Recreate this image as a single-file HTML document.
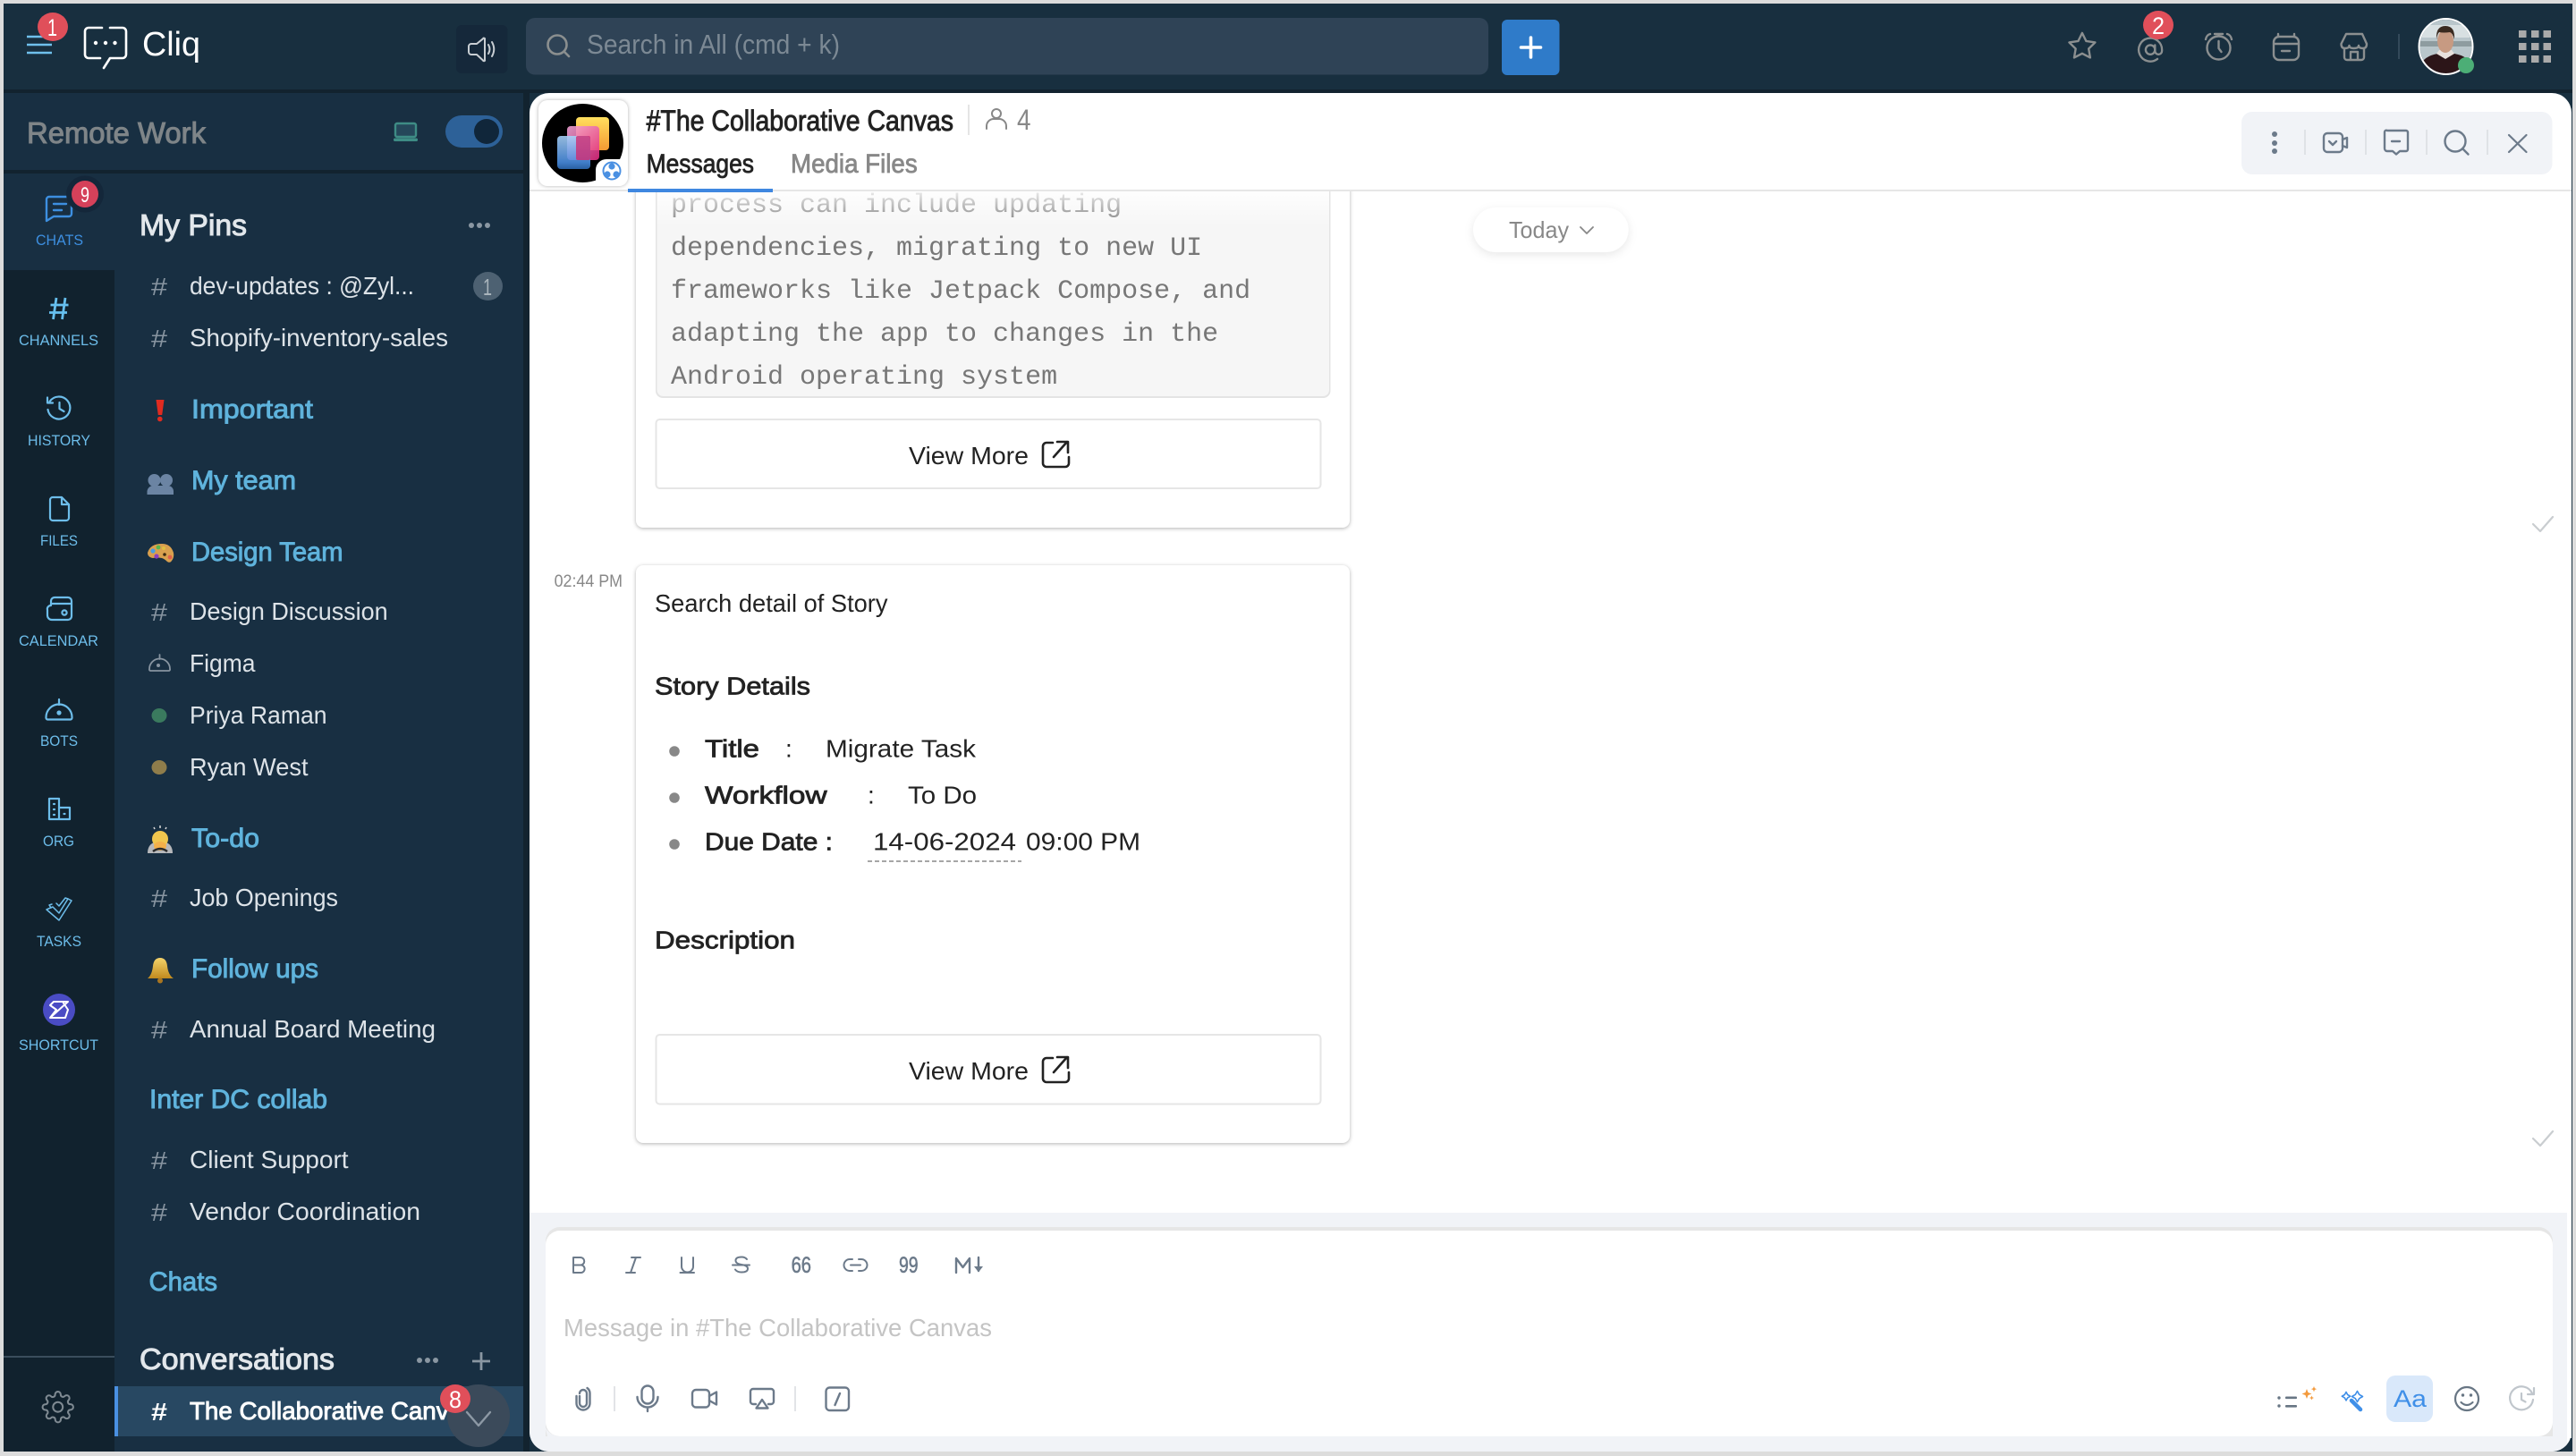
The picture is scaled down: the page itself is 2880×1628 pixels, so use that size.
<!DOCTYPE html>
<html lang="en"><head><meta charset="utf-8"><title>Cliq</title>
<style>
html,body{margin:0;padding:0;background:#dcdcdc}
svg{display:block}
text{font-family:"Liberation Sans",sans-serif;white-space:pre}
.lb{font-size:17px;fill:#6dbdea}
.it{font-size:28px;fill:#dde3e8}
.hd{font-size:29.5px;fill:#5fb3dc;stroke:#5fb3dc;stroke-width:.9}
.h2{font-size:33px;fill:#e2e7eb;stroke:#e2e7eb;stroke-width:1}
.hs{font-size:28px;fill:#8794a0}
.m{font-family:"Liberation Mono",monospace;font-size:30px;fill:#777}
.b{font-size:28px;fill:#222}
.s{font-size:28px;fill:#222;stroke:#222;stroke-width:.8}
.ic{fill:none;stroke-linecap:round;stroke-linejoin:round}
</style></head><body>
<svg xmlns="http://www.w3.org/2000/svg" width="2880" height="1628" viewBox="0 0 2880 1628">
<defs>
<clipPath id="card"><rect x="592" y="104" width="2283" height="1519" rx="22"/></clipPath>
<clipPath id="av"><ellipse cx="2734.5" cy="52" rx="29" ry="30"/></clipPath>
<clipPath id="conv"><rect x="128" y="1550" width="373" height="56"/></clipPath>
<clipPath id="msgs"><rect x="592" y="214" width="2283" height="1142"/></clipPath>
<linearGradient id="fade" x1="0" y1="0" x2="0" y2="1"><stop offset="0" stop-color="#fff" stop-opacity=".85"/><stop offset="1" stop-color="#fff" stop-opacity="0"/></linearGradient>
<linearGradient id="yel" x1="0" y1="0" x2="0" y2="1"><stop offset="0" stop-color="#ffdf5e"/><stop offset="1" stop-color="#f59a33"/></linearGradient>
<linearGradient id="blu" x1="0" y1="0" x2="0" y2="1"><stop offset="0" stop-color="#a9d3fa"/><stop offset=".8" stop-color="#4a8fe4"/><stop offset="1" stop-color="#2e6db8"/></linearGradient>
<linearGradient id="pnk" x1="0" y1="0" x2="1" y2="1"><stop offset="0" stop-color="#f4a6d8"/><stop offset="1" stop-color="#e0287e"/></linearGradient>
<linearGradient id="gold" x1="0" y1="0" x2="0" y2="1"><stop offset="0" stop-color="#f3d36a"/><stop offset="1" stop-color="#c08a1e"/></linearGradient>
</defs>

<rect width="2880" height="1628" fill="#dcdcdc"/>
<rect x="4" y="4" width="2872" height="1619" fill="#182f3f"/>
<rect x="4" y="100" width="2872" height="4" fill="#12232f"/>
<rect x="4" y="104" width="581" height="86" fill="#182f42"/>
<rect x="4" y="190" width="581" height="4" fill="#12232f"/>
<rect x="585" y="104" width="7" height="1519" fill="#12232f"/>
<rect x="128" y="194" width="457" height="1429" fill="#182f42"/>
<rect x="4" y="194" width="124" height="108" fill="#182f42"/>
<rect x="4" y="302" width="124" height="1321" fill="#11222e"/>

<!-- top bar left -->
<path d="M30 41h28M30 50h28M30 59h28" stroke="#6fc0ec" stroke-width="2.6" fill="none"/>
<ellipse cx="59" cy="30" rx="17" ry="16" fill="#e04f5a"/>
<text x="53" y="40" font-size="27" fill="#fff" textLength="11" lengthAdjust="spacingAndGlyphs">1</text>
<path class="ic" d="M114 31H99a4 4 0 0 0-4 4v26a4 4 0 0 0 4 4h13M123 31h14a4 4 0 0 1 4 4v26a4 4 0 0 1-4 4h-14l-7 11" stroke="#fff" stroke-width="2.6"/>
<circle cx="107" cy="48" r="2.2" fill="#fff"/><circle cx="118" cy="48" r="2.2" fill="#fff"/><circle cx="128.5" cy="48" r="2.2" fill="#fff"/>
<text x="159" y="62" font-size="38" fill="#fff" textLength="65" lengthAdjust="spacingAndGlyphs">Cliq</text>
<rect x="510" y="28" width="57.5" height="54" rx="6" fill="#15283a"/>
<g class="ic" stroke="#c8ced3" stroke-width="2"><path d="M533 49h-6a3 3 0 0 0-3 3v6a3 3 0 0 0 3 3h6l7 6.5a1 1 0 0 0 2-.7V44a1 1 0 0 0-2-.7z"/><path d="M546 50q3 5 0 10M550 47q4.5 8 0 16"/></g>
<rect x="588" y="20" width="1076" height="63.5" rx="10" fill="#2f4356"/>
<g class="ic" stroke="#8b8f8f" stroke-width="2.6"><circle cx="623" cy="50" r="10.5"/><path d="M631 58l5 5"/></g>
<text x="656" y="60" font-size="31" fill="#7c8994" textLength="283" lengthAdjust="spacingAndGlyphs">Search in All (cmd + k)</text>
<rect x="1679" y="22" width="64.5" height="62" rx="6" fill="#2f7bc9"/>
<path d="M1711.500 42v22M1700.500 53h22" stroke="#fff" stroke-width="3.6" stroke-linecap="round"/>

<!-- top bar right -->
<g class="ic" stroke="#8b8f90" stroke-width="2.4">
<polygon transform="translate(2310.5 34) scale(1.45)" stroke-width="1.65" points="12 2 15.09 8.26 22 9.27 17 14.14 18.18 21.02 12 17.77 5.82 21.02 7 14.14 2 9.27 8.91 8.26 12 2"/>
<g transform="translate(2388.5 40) scale(1.3)" stroke-width="1.8"><circle cx="12" cy="12" r="4"/><path d="M16 8v5a3 3 0 0 0 6 0v-1a10 10 0 1 0-3.92 7.94"/></g>
<circle cx="2480.5" cy="53.5" r="13"/><path d="M2476 38h9M2480.5 38v2M2466 44q1-5 5-6M2495 44q-1-5-5-6M2480.5 46v8l3 4"/>
<rect x="2542" y="41" width="28" height="26" rx="6"/><path d="M2547 41v-3M2565 41v-3M2542 49h28M2551 57h9"/>
<path d="M2623 38h18l5 11q0 5-4 5-5 0-5-3 0 3-5.5 3-5 0-5-3 0 3-5 3-4 0-4-5zM2621 54v10a3 3 0 0 0 3 3h16a3 3 0 0 0 3-3V54M2628 67v-9h8v9"/>
</g>
<ellipse cx="2413" cy="28" rx="17" ry="16" fill="#e04f5a"/>
<text x="2406" y="38" font-size="27" fill="#fff" textLength="14" lengthAdjust="spacingAndGlyphs">2</text>
<rect x="2681" y="38" width="2" height="28" fill="#33495a"/>
<g clip-path="url(#av)">
<rect x="2700" y="18" width="70" height="70" fill="#b9c6cb"/>
<rect x="2705" y="28" width="60" height="14" fill="#d8e0e2"/>
<rect x="2705" y="46" width="60" height="6" fill="#8e9ca0"/>
<path d="M2705 90v-15q4-12 20-15h19q17 3 20 15v15z" fill="#2c1518"/>
<path d="M2724 60l10 6 10-6-3-4h-14z" fill="#e8e0dc"/>
<ellipse cx="2734" cy="46" rx="9" ry="13" fill="#c79a82"/>
<path d="M2724 44q-1-15 10-15 11 0 10 15-2-7-5-8-7 1-12 0-2 2-3 8z" fill="#3a2a20"/>
</g>
<ellipse cx="2734.5" cy="52" rx="30" ry="31" fill="none" stroke="#fff" stroke-width="2"/>
<circle cx="2757" cy="73" r="9" fill="#4cae76"/>
<g fill="#aaa">
<rect x="2816" y="34" width="8.5" height="8"/><rect x="2830" y="34" width="8.5" height="8"/><rect x="2843.5" y="34" width="8.5" height="8"/>
<rect x="2816" y="48" width="8.5" height="8"/><rect x="2830" y="48" width="8.5" height="8"/><rect x="2843.5" y="48" width="8.5" height="8"/>
<rect x="2816" y="62" width="8.5" height="8"/><rect x="2830" y="62" width="8.5" height="8"/><rect x="2843.5" y="62" width="8.5" height="8"/>
</g>

<!-- Remote work header -->
<text x="30" y="160" font-size="33" fill="#7f8588" stroke="#7f8588" stroke-width="1" textLength="200" lengthAdjust="spacingAndGlyphs">Remote Work</text>
<g stroke="#3e8c85" fill="none" stroke-width="2.4"><rect x="442" y="138" width="23" height="15" rx="2" fill="#25475a"/></g><rect x="440" y="154.5" width="27" height="3.5" rx="1.5" fill="#3e8c85"/>
<rect x="498" y="129" width="64" height="36" rx="18" fill="#2d6198"/>
<circle cx="544" cy="147" r="14" fill="#10263a"/>

<!-- rail -->
<g class="ic" stroke="#3d8fe0" stroke-width="2.4"><path d="M55 220h22a3 3 0 0 1 3 3v16a3 3 0 0 1-3 3H60l-8 5V223a3 3 0 0 1 3-3z"/><path d="M60 228h14M60 235h9"/></g>
<text x="40" y="274" font-size="17" fill="#3d8fe0" textLength="53" lengthAdjust="spacingAndGlyphs">CHATS</text>
<ellipse cx="95" cy="217" rx="21" ry="20.5" fill="#14273a"/>
<ellipse cx="95" cy="217" rx="15" ry="15" fill="#d5415a"/>
<text x="90" y="226" font-size="24" fill="#fff" textLength="10" lengthAdjust="spacingAndGlyphs">9</text>

<path d="M63 333l-3.500 24M73 333l-3.500 24M56.500 341h20M55 349.500h20" stroke="#66bfee" stroke-width="2.8" fill="none"/>
<text class="lb" x="21" y="386" textLength="89" lengthAdjust="spacingAndGlyphs">CHANNELS</text>

<g class="ic" stroke="#6dbdea" stroke-width="2.2">
<path d="M55.5 449A12.5 12.5 0 1 1 53.5 458"/><path d="M53 444.5v6h6M66.5 450v7l5 3"/>
<path d="M59 556h10l8 8v15a3 3 0 0 1-3 3H59a3 3 0 0 1-3-3V559a3 3 0 0 1 3-3zM69 556v8h8"/>
<path d="M57 677v-5a4 4 0 0 1 4-4h15a4 4 0 0 1 4 4v17a4 4 0 0 1-4 4H58a5 5 0 0 1-5-5v-6a4 4 0 0 1 4-5zM57 675h22"/><circle cx="72" cy="685" r="2.6"/>
<path d="M51.5 802a14.5 14.5 0 0 1 29 0 2 2 0 0 1-2 2.5H53.500a2 2 0 0 1-2-2.500zM66 782v6"/>
<path d="M55 916v-23h11v23zM66 903h12v13H66zM60 899h1M60 905h1M60 911h1M71.500 910h1"/>
</g>
<g class="ic" stroke="#6dbdea" stroke-width="1.5"><path d="M52 1017l14 12 14-22-4-2-10 16-7-7z"/><path d="M57 1015l-2-3 3-1M63 1010l3 3 7-9 3 1"/></g>
<circle cx="66" cy="797" r="2.6" fill="#6dbdea"/>
<text class="lb" x="31" y="498" textLength="70" lengthAdjust="spacingAndGlyphs">HISTORY</text>
<text class="lb" x="45" y="610" textLength="42" lengthAdjust="spacingAndGlyphs">FILES</text>
<text class="lb" x="21" y="722" textLength="89" lengthAdjust="spacingAndGlyphs">CALENDAR</text>
<text class="lb" x="45" y="834" textLength="42" lengthAdjust="spacingAndGlyphs">BOTS</text>
<text class="lb" x="48" y="946" textLength="35" lengthAdjust="spacingAndGlyphs">ORG</text>
<text class="lb" x="41" y="1058" textLength="50" lengthAdjust="spacingAndGlyphs">TASKS</text>
<ellipse cx="66" cy="1129" rx="18" ry="18" fill="#4a4cc4"/>
<path class="ic" stroke="#fff" stroke-width="2" d="M60 1120h16l-20 18h17l3-9-6-9M56 1124l4-4M56 1124l7 5-7 9"/>
<text class="lb" x="21" y="1174" textLength="89" lengthAdjust="spacingAndGlyphs">SHORTCUT</text>
<rect x="4" y="1516" width="124" height="2" fill="#3a4d5c"/>
<g transform="translate(46 1554.5) scale(1.56)"><path class="ic" stroke="#7f8a92" stroke-width="1.3" d="M19.4 15a1.65 1.65 0 0 0 .33 1.82l.06.06a2 2 0 0 1 0 2.83 2 2 0 0 1-2.83 0l-.06-.06a1.65 1.65 0 0 0-1.82-.33 1.65 1.65 0 0 0-1 1.51V21a2 2 0 0 1-2 2 2 2 0 0 1-2-2v-.09A1.65 1.65 0 0 0 9 19.4a1.65 1.65 0 0 0-1.82.33l-.06.06a2 2 0 0 1-2.83 0 2 2 0 0 1 0-2.83l.06-.06a1.65 1.65 0 0 0 .33-1.82 1.65 1.65 0 0 0-1.51-1H3a2 2 0 0 1-2-2 2 2 0 0 1 2-2h.09A1.65 1.65 0 0 0 4.6 9a1.65 1.65 0 0 0-.33-1.82l-.06-.06a2 2 0 0 1 0-2.83 2 2 0 0 1 2.83 0l.06.06a1.65 1.65 0 0 0 1.82.33H9a1.65 1.65 0 0 0 1-1.51V3a2 2 0 0 1 2-2 2 2 0 0 1 2 2v.09a1.65 1.65 0 0 0 1 1.51 1.65 1.65 0 0 0 1.82-.33l.06-.06a2 2 0 0 1 2.83 0 2 2 0 0 1 0 2.83l-.06.06a1.65 1.65 0 0 0-.33 1.82V9a1.65 1.65 0 0 0 1.51 1H21a2 2 0 0 1 2 2 2 2 0 0 1-2 2h-.09a1.65 1.65 0 0 0-1.51 1z"/><circle class="ic" stroke="#7f8a92" stroke-width="1.3" cx="12" cy="12" r="3.5"/></g>

<!-- panel -->
<text class="h2" x="156" y="263" textLength="120" lengthAdjust="spacingAndGlyphs">My Pins</text>
<g fill="#8a97a2"><circle cx="527" cy="252" r="3"/><circle cx="536" cy="252" r="3"/><circle cx="545" cy="252" r="3"/></g>
<text class="hs" x="169" y="330" textLength="18" lengthAdjust="spacingAndGlyphs">#</text>
<text class="it" x="212" y="329" textLength="251" lengthAdjust="spacingAndGlyphs">dev-updates : @Zyl...</text>
<ellipse cx="545.5" cy="320" rx="16.5" ry="16" fill="#4d6172"/>
<text x="540" y="330" font-size="26" fill="#a9b4bc" textLength="10" lengthAdjust="spacingAndGlyphs">1</text>
<text class="hs" x="169" y="388" textLength="18" lengthAdjust="spacingAndGlyphs">#</text>
<text class="it" x="212" y="387" textLength="289" lengthAdjust="spacingAndGlyphs">Shopify-inventory-sales</text>

<path d="M174.5 447h9l-2.3 17h-4.4z" fill="#e02b20"/><circle cx="178.8" cy="468.5" r="2.8" fill="#e02b20"/>
<text class="hd" x="214" y="467.500" textLength="136" lengthAdjust="spacingAndGlyphs">Important</text>

<g fill="#6b84a3"><circle cx="172.5" cy="537" r="7"/><circle cx="186" cy="537" r="7"/><path d="M164.500 553v-4q1-5 6-6h18q5 1 5.500 6v4z"/></g>
<text class="hd" x="214" y="547" textLength="117" lengthAdjust="spacingAndGlyphs">My team</text>

<path d="M165 618q3-10 16-10 10 0 13 10 1 5-2 9-2 3-5 1-3-3-6-4-5-1-10 0-6-1-6-6z" fill="#d9a04f"/>
<circle cx="171" cy="616" r="2.6" fill="#4a9fe0"/><circle cx="177" cy="612" r="2.4" fill="#56b84e"/><circle cx="183" cy="613" r="2" fill="#e0c040"/><circle cx="175" cy="622" r="2.6" fill="#8c3fc0"/><circle cx="190" cy="623" r="2.4" fill="#e0604a"/><circle cx="184" cy="620" r="1.8" fill="#3b2a12"/>
<text class="hd" x="214" y="627" textLength="169.500" lengthAdjust="spacingAndGlyphs">Design Team</text>

<text class="hs" x="169" y="694" textLength="18" lengthAdjust="spacingAndGlyphs">#</text>
<text class="it" x="212" y="693" textLength="221.6" lengthAdjust="spacingAndGlyphs">Design Discussion</text>
<g class="ic" stroke="#8794a0" stroke-width="1.8"><path d="M167 748a11.5 11.5 0 0 1 23 0 1.5 1.5 0 0 1-1.5 2h-20a1.5 1.5 0 0 1-1.5-2zM178.5 732v5"/></g><circle cx="177" cy="744" r="2" fill="#8794a0"/>
<text class="it" x="212" y="751" textLength="73.5" lengthAdjust="spacingAndGlyphs">Figma</text>
<ellipse cx="178" cy="800" rx="8.5" ry="8" fill="#3a7a5e"/>
<text class="it" x="212" y="809" textLength="153.5" lengthAdjust="spacingAndGlyphs">Priya Raman</text>
<ellipse cx="178" cy="858" rx="8.5" ry="8" fill="#8f7d4b"/>
<text class="it" x="212" y="867" textLength="132.5" lengthAdjust="spacingAndGlyphs">Ryan West</text>

<path d="M173 927l-1-2M179 926v-3M185 927l1-2" stroke="#d8d8d8" stroke-width="1.5"/>
<path d="M165 954q0-9 7-12h14q7 3 7 12z" fill="#b6b8bb"/>
<circle cx="179" cy="938" r="9" fill="#f0c64e"/><ellipse cx="179" cy="946" rx="7" ry="5" fill="#f3b04a"/><path d="M171 952q8-6 16 0" stroke="#2a2a2a" stroke-width="2.5" fill="none"/>
<text class="hd" x="214" y="947" textLength="76" lengthAdjust="spacingAndGlyphs">To-do</text>
<text class="hs" x="169" y="1014" textLength="18" lengthAdjust="spacingAndGlyphs">#</text>
<text class="it" x="212" y="1013" textLength="166" lengthAdjust="spacingAndGlyphs">Job Openings</text>

<path d="M165 1094q5-4 6-14 1-9 8-9 7 0 8 9 1 10 7 14z" fill="url(#gold)"/><circle cx="179" cy="1096.5" r="3" fill="#a87520"/>
<text class="hd" x="214" y="1093" textLength="142" lengthAdjust="spacingAndGlyphs">Follow ups</text>
<text class="hs" x="169" y="1161" textLength="18" lengthAdjust="spacingAndGlyphs">#</text>
<text class="it" x="212" y="1160" textLength="275" lengthAdjust="spacingAndGlyphs">Annual Board Meeting</text>
<text class="hd" x="167" y="1239" textLength="199" lengthAdjust="spacingAndGlyphs">Inter DC collab</text>
<text class="hs" x="169" y="1307" textLength="18" lengthAdjust="spacingAndGlyphs">#</text>
<text class="it" x="212" y="1306" textLength="177.6" lengthAdjust="spacingAndGlyphs">Client Support</text>
<text class="hs" x="169" y="1365" textLength="18" lengthAdjust="spacingAndGlyphs">#</text>
<text class="it" x="212" y="1364" textLength="258" lengthAdjust="spacingAndGlyphs">Vendor Coordination</text>
<text class="hd" x="166.5" y="1443" textLength="76.5" lengthAdjust="spacingAndGlyphs">Chats</text>
<text class="h2" x="156" y="1531" textLength="218" lengthAdjust="spacingAndGlyphs">Conversations</text>
<g fill="#8a97a2"><circle cx="469" cy="1521" r="3"/><circle cx="478" cy="1521" r="3"/><circle cx="487" cy="1521" r="3"/></g>
<path d="M538 1512v20M528 1522h20" stroke="#8a97a2" stroke-width="2.8"/>
<rect x="128" y="1550" width="457" height="56" fill="#284862"/>
<rect x="128" y="1550" width="4" height="56" fill="#4a90e2"/>
<text x="169" y="1588" font-size="28" fill="#fff" textLength="18" lengthAdjust="spacingAndGlyphs" font-weight="bold">#</text>
<g clip-path="url(#conv)"><text x="212" y="1587" font-size="28" fill="#fff" stroke="#fff" stroke-width=".9" textLength="305" lengthAdjust="spacingAndGlyphs">The Collaborative Canva</text></g>
<ellipse cx="535" cy="1583" rx="35" ry="35" fill="#3b4a5a"/>
<path class="ic" d="M522 1579l13 15 13-15" stroke="#8d99a5" stroke-width="2.4"/>
<ellipse cx="509" cy="1564" rx="17" ry="16" fill="#e04f5a"/>
<text x="502" y="1574" font-size="27" fill="#fff" textLength="14" lengthAdjust="spacingAndGlyphs">8</text>

<!-- main card -->
<g clip-path="url(#card)">
<rect x="592" y="104" width="2283" height="1519" fill="#fff"/>
<rect x="592" y="1356" width="2278" height="267" fill="#f1f3f7"/>
</g>
<rect x="592" y="212" width="2283" height="2" fill="#e6e6e6"/>

<g clip-path="url(#msgs)">
<g style="filter:drop-shadow(0 1px 2px rgba(0,0,0,.3))">
<rect x="711" y="190" width="798" height="400" rx="8" fill="#fff"/>
<rect x="711" y="632" width="798" height="646" rx="8" fill="#fff"/>
</g>
<rect x="733" y="190" width="754.5" height="255" rx="8" fill="#e4e4e4"/>
<rect x="734.500" y="190" width="751.5" height="253" rx="7" fill="#f6f6f6"/>
<text class="m" x="750" y="237">process can include updating</text>
<text class="m" x="750" y="285">dependencies, migrating to new UI</text>
<text class="m" x="750" y="333">frameworks like Jetpack Compose, and</text>
<text class="m" x="750" y="381">adapting the app to changes in the</text>
<text class="m" x="750" y="429">Android operating system</text>
<rect x="734.500" y="214" width="751.5" height="40" fill="url(#fade)"/>
<rect x="733.500" y="469" width="743" height="77" rx="4" fill="#fff" stroke="#e6e6e6" stroke-width="2"/>
<text class="b" x="1016" y="519" textLength="134" lengthAdjust="spacingAndGlyphs">View More</text>
<path class="ic" stroke="#222" stroke-width="2.6" d="M1177 495h-7a4 4 0 0 0-4 4v19a4 4 0 0 0 4 4h21a4 4 0 0 0 4-4v-7M1178 511l15-17M1182 494h12v12"/>

<text x="619.6" y="656" font-size="19" fill="#888" textLength="76.4" lengthAdjust="spacingAndGlyphs">02:44 PM</text>
<text class="b" x="732" y="684" textLength="260.5" lengthAdjust="spacingAndGlyphs">Search detail of Story</text>
<text class="s" x="732" y="776.500" textLength="174" lengthAdjust="spacingAndGlyphs">Story Details</text>
<circle cx="754" cy="840" r="5.8" fill="#888"/><circle cx="754" cy="892" r="5.8" fill="#888"/><circle cx="754" cy="944" r="5.8" fill="#888"/>
<text class="s" x="788" y="846.500" textLength="61" lengthAdjust="spacingAndGlyphs">Title</text>
<text class="b" x="878" y="846.500">:</text>
<text class="b" x="923" y="846.500" textLength="168" lengthAdjust="spacingAndGlyphs">Migrate Task</text>
<text class="s" x="788" y="898.500" textLength="136.6" lengthAdjust="spacingAndGlyphs">Workflow</text>
<text class="b" x="970" y="898.500">:</text>
<text class="b" x="1015" y="898.500" textLength="77" lengthAdjust="spacingAndGlyphs">To Do</text>
<text class="s" x="788" y="950.500" textLength="143" lengthAdjust="spacingAndGlyphs">Due Date :</text>
<text class="b" x="976" y="950.500" textLength="160" lengthAdjust="spacingAndGlyphs">14-06-2024</text>
<text class="b" x="1147" y="950.500" textLength="128" lengthAdjust="spacingAndGlyphs">09:00 PM</text>
<path d="M970 963h172" stroke="#888" stroke-width="1.6" stroke-dasharray="5 3"/>
<text class="s" x="732" y="1060.500" textLength="157" lengthAdjust="spacingAndGlyphs">Description</text>
<rect x="733.500" y="1157" width="743" height="77.5" rx="4" fill="#fff" stroke="#e6e6e6" stroke-width="2"/>
<text class="b" x="1016" y="1207" textLength="134" lengthAdjust="spacingAndGlyphs">View More</text>
<path class="ic" stroke="#222" stroke-width="2.6" d="M1177 1183h-7a4 4 0 0 0-4 4v19a4 4 0 0 0 4 4h21a4 4 0 0 0 4-4v-7M1178 1199l15-17M1182 1182h12v12"/>

<g style="filter:drop-shadow(0 3px 5px rgba(0,0,0,.09))"><rect x="1647" y="232" width="173.7" height="50" rx="25" fill="#fff"/></g>
<text x="1687" y="266" font-size="26" fill="#888" textLength="67" lengthAdjust="spacingAndGlyphs">Today</text>
<path class="ic" d="M1767 254l7 7 7-7" stroke="#888" stroke-width="1.8"/>
<path class="ic" d="M2832 586l8 8 14-16" stroke="#c9cdd0" stroke-width="2.2"/>
<path class="ic" d="M2832 1273l8 8 14-16" stroke="#c9cdd0" stroke-width="2.2"/>
</g>

<!-- chat header -->
<g style="filter:drop-shadow(0 0 2px rgba(0,0,0,.3))"><rect x="602" y="112" width="100" height="96" rx="10" fill="#fff"/></g>
<ellipse cx="651.5" cy="160" rx="45.5" ry="44" fill="#000"/>
<rect x="644" y="131" width="37" height="37" rx="4" fill="url(#yel)"/>
<rect x="634" y="141" width="36" height="38" rx="4" fill="url(#pnk)" opacity=".88"/>
<rect x="623" y="152" width="37" height="37" rx="4" fill="url(#blu)" opacity=".88"/>
<rect x="644" y="152" width="16" height="27" rx="2" fill="#d02a70" opacity=".8"/>
<path d="M702 178h-24a12 12 0 0 0-12 12v18h26a10 10 0 0 0 10-10z" fill="#fff"/>
<circle cx="684" cy="191" r="9.5" fill="none" stroke="#4a90e2" stroke-width="2"/><circle cx="684" cy="186" r="3.6" fill="#4a90e2"/><circle cx="679" cy="195" r="3.6" fill="#4a90e2"/><circle cx="689" cy="195" r="3.6" fill="#4a90e2"/>
<text x="722.6" y="146" font-size="32" fill="#222" stroke="#222" stroke-width=".9" textLength="343.4" lengthAdjust="spacingAndGlyphs">#The Collaborative Canvas</text>
<rect x="1082" y="117" width="2" height="34" fill="#e5e5e5"/>
<g class="ic" stroke="#888" stroke-width="2"><circle cx="1114" cy="127" r="5"/><path d="M1103 144v-3a8 8 0 0 1 8-8h6a8 8 0 0 1 8 8v3" stroke-width="2"/></g>
<text x="1137" y="145" font-size="32" fill="#888" textLength="15.5" lengthAdjust="spacingAndGlyphs">4</text>
<text x="722.6" y="193" font-size="30" fill="#222" stroke="#222" stroke-width=".8" textLength="120.4" lengthAdjust="spacingAndGlyphs">Messages</text>
<text x="884" y="193" font-size="30" fill="#888" stroke="#888" stroke-width=".8" textLength="141.7" lengthAdjust="spacingAndGlyphs">Media Files</text>
<rect x="702" y="211" width="162" height="4" fill="#3f87e0"/>

<rect x="2506" y="125" width="347.5" height="70" rx="12" fill="#f1f3f7"/>
<g fill="#6c7a8a"><circle cx="2543" cy="150" r="3"/><circle cx="2543" cy="160" r="3"/><circle cx="2543" cy="169" r="3"/></g>
<g fill="#dfe2e6"><rect x="2576" y="145" width="2" height="28"/><rect x="2644" y="145" width="2" height="28"/><rect x="2712" y="145" width="2" height="28"/><rect x="2780" y="145" width="2" height="28"/></g>
<g class="ic" stroke="#6c7a8a" stroke-width="2.4">
<rect x="2598" y="149" width="21" height="21" rx="4"/><path d="M2619 156l5-2v11l-5-2M2604 158l4 4 4-4"/>
<path d="M2669 146h21a2 2 0 0 1 2 2v19a2 2 0 0 1-2 2h-7l-4 3.5-4-3.5h-6a3 3 0 0 1-3-3v-18a2 2 0 0 1 3-2zM2674 158h9"/>
<circle cx="2745" cy="158" r="11.5"/><path d="M2753.5 166.5l6 6"/>
<path d="M2805 151l19.5 19M2824.5 151l-19.5 19" stroke-width="2.2"/>
</g>

<!-- composer -->
<path d="M610 1606v-218a16 16 0 0 1 16-16h2212a16 16 0 0 1 16 16v218z" fill="#e6e6e6"/>
<path d="M610 1590v-198a16 16 0 0 1 16-16h2212a16 16 0 0 1 16 16v198a16 16 0 0 1-16 16H626a16 16 0 0 1-16-16z" fill="#fff"/>
<path d="M608 1590a18 18 0 0 0 18 16H612z" fill="#f1f3f7"/>
<rect x="2870" y="1340" width="5" height="268" fill="#fff"/>
<g class="ic" stroke="#6c7a8a" stroke-width="2">
<path d="M641 1406v17M641 1406h8a4 4 0 0 1 0 8.500h-8M641 1414.500h9a4.300 4.300 0 0 1 0 8.500h-9"/>
<path d="M706 1406h10M700 1423h10M711 1406l-6 17"/>
<path d="M762 1406v10a6.500 6.500 0 0 0 13 0v-10M760.500 1423h15.500"/>
<path d="M835 1408q-2-2.500-6-2.500-7 0-6.500 4.500 .5 3 6.500 4 7 1 7 4.500 0 4-7 4-5 0-7-3M819 1414.500h19"/>
</g>
<text x="884.6" y="1423" font-size="25" fill="#6c7a8a" stroke="#6c7a8a" stroke-width=".6" textLength="22.4" lengthAdjust="spacingAndGlyphs">66</text>
<path class="ic" stroke="#6c7a8a" stroke-width="2" d="M953 1408h-3a6.500 6.500 0 0 0 0 13h3M960 1408h3a6.500 6.500 0 0 1 0 13h-3M951 1414.500h11"/>
<text x="1005" y="1423" font-size="25" fill="#6c7a8a" stroke="#6c7a8a" stroke-width=".6" textLength="21.6" lengthAdjust="spacingAndGlyphs">99</text>
<path class="ic" stroke="#6c7a8a" stroke-width="2.4" d="M1069 1423v-16l7.500 10 7.500-10v16M1094 1406v15"/><path d="M1089 1416h10l-5 6.500z" fill="#6c7a8a"/>
<text x="630" y="1494" font-size="28" fill="#c4c4c4" textLength="479" lengthAdjust="spacingAndGlyphs">Message in #The Collaborative Canvas</text>

<g class="ic" stroke="#6c7a8a" stroke-width="2.4">
<path d="M648 1561v8a4 4 0 0 0 8 0v-11a4 4 0 0 0-8 0"/><path d="M644.500 1561v8a7.500 7.500 0 0 0 15 0v-11a7.500 7.500 0 0 0-3-6"/>
<rect x="717.500" y="1549.500" width="13" height="20" rx="6.500"/><path d="M712.500 1562a11.500 11.500 0 0 0 23 0M724 1573.500v4.500"/>
<rect x="774" y="1554" width="19" height="19.500" rx="4"/><path d="M793 1561l8-4.500v14l-8-4.500"/>
<path d="M845 1570h-3a3 3 0 0 1-3-3v-11a3 3 0 0 1 3-3h20a3 3 0 0 1 3 3v11a3 3 0 0 1-3 3h-3M852 1565l6.500 9.500h-13z"/>
<rect x="923.500" y="1551.500" width="25.500" height="25.500" rx="4"/><path d="M939 1558l-5.500 13"/>
</g>
<g fill="#e2e4e7"><rect x="686" y="1550" width="2" height="28"/><rect x="888" y="1550" width="2" height="28"/></g>

<g fill="#687684"><circle cx="2548" cy="1563" r="1.700"/><circle cx="2548" cy="1572" r="1.700"/><rect x="2555" y="1561.500" width="13" height="2.600" rx="1"/><rect x="2555" y="1571" width="13" height="2.600" rx="1"/></g>
<g fill="#f39a3c"><path d="M2579 1553l1.500 4 4 1.500-4 1.500-1.500 4-1.500-4-4-1.500 4-1.500z"/><path d="M2587 1550l.9 2.200 2.200.9-2.200.9-.9 2.200-.9-2.200-2.200-.9 2.200-.9z"/><path d="M2584.500 1560.500l.7 1.800 1.800.7-1.800.7-.7 1.800-.7-1.800-1.800-.7 1.800-.7z"/></g>
<g stroke="#3f8fe8" fill="none" stroke-linejoin="round"><path d="M2623 1556.500l1.700 3 3 1.700-3 1.700-1.700 3-1.700-3-3-1.700 3-1.700z" stroke-width="1.600"/><path d="M2635.500 1555.500l2.200 3.800 3.800 2.200-3.800 2.200-2.200 3.800-2.200-3.800-3.800-2.200 3.800-2.200z" stroke-width="1.600"/><path d="M2629 1566l10 10" stroke-width="4.500" stroke-linecap="round"/></g>
<rect x="2668" y="1538" width="52" height="52" rx="10" fill="#d9e8fa"/>
<text x="2676" y="1573" font-size="27" fill="#3f8fe8" textLength="37" lengthAdjust="spacingAndGlyphs">Aa</text>
<g class="ic" stroke="#687684" stroke-width="2.200"><circle cx="2758" cy="1564" r="13"/><path d="M2751.500 1568q6.500 6 13 0"/></g>
<circle cx="2753.500" cy="1560" r="1.700" fill="#687684"/><circle cx="2762.500" cy="1560" r="1.700" fill="#687684"/>
<g class="ic" stroke="#c0c6cc" stroke-width="2.200"><path d="M2831 1558a13 13 0 1 0 1 7"/><path d="M2833 1552v7h-7M2819 1558v7l4.500 2.500"/></g>
</svg>
</body></html>
